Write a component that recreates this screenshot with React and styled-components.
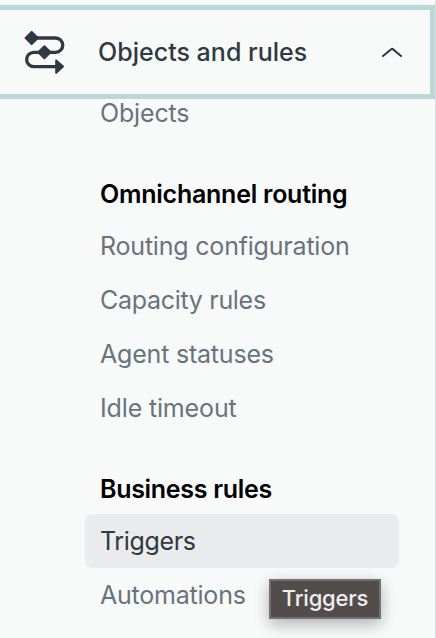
import React from "react";
import styled, { createGlobalStyle } from "styled-components";

const sections = [
  {
    items: [{ label: "Objects", spacing: -0.15 }],
  },
  {
    title: "Omnichannel routing",
    spacing: -0.25,
    items: [
      { label: "Routing configuration", spacing: -0.2 },
      { label: "Capacity rules", spacing: -0.3 },
      { label: "Agent statuses", spacing: -0.2 },
      { label: "Idle timeout", spacing: -0.15 },
    ],
  },
  {
    title: "Business rules",
    spacing: -0.3,
    items: [
      { label: "Triggers", spacing: -0.35, selected: true },
      { label: "Automations", spacing: -0.22, tooltip: "Triggers" },
    ],
  },
];

function RulesIcon() {
  return (
    <svg width="42" height="48" viewBox="0 0 42 48" fill="none">
      <path
        d="M8 10H32.6a7.1 7.1 0 0 1 0 14.3H10.8a7.1 7.1 0 0 0 0 14.3H34"
        stroke="#2f3941"
        strokeWidth="3.3"
      />
      <path
        d="M8.7 3.9L14.8 10L8.7 16.1L2.6 10ZM21.4 18.2L27.5 24.3L21.4 30.4L15.3 24.3ZM33.2 32.4L40 38.6L33.2 44.8Z"
        fill="#2f3941"
        stroke="#2f3941"
        strokeWidth="2"
        strokeLinejoin="round"
      />
    </svg>
  );
}

function ChevronUp() {
  return (
    <svg width="20" height="10" viewBox="0 0 20 10" fill="none">
      <path
        d="M1 9L9.5 1.9a0.8 0.8 0 0 1 1 0L19 9"
        stroke="#2f3941"
        strokeWidth="2"
        strokeLinecap="round"
      />
    </svg>
  );
}

export default function App() {
  return (
    <>
      <GlobalStyle />
      <Sidebar>
        <SectionHeader>
          <RulesIcon />
          <HeaderLabel>Objects and rules</HeaderLabel>
          <ChevronUp />
        </SectionHeader>
        <Menu>
          {sections.map((section, i) => (
            <React.Fragment key={i}>
              {section.title ? (
                <GroupTitle $spacing={section.spacing}>{section.title}</GroupTitle>
              ) : null}
              {section.items.map((item) => (
                <MenuItem
                  key={item.label}
                  $selected={item.selected}
                  $spacing={item.spacing}
                >
                  {item.label}
                  {item.tooltip ? <Tooltip>{item.tooltip}</Tooltip> : null}
                </MenuItem>
              ))}
            </React.Fragment>
          ))}
        </Menu>
      </Sidebar>
    </>
  );
}

const GlobalStyle = createGlobalStyle`
  * {
    box-sizing: border-box;
  }
  body {
    margin: 0;
    background: #f8faf9;
    font-family: Inter, "Liberation Sans", sans-serif;
    overflow: hidden;
  }
`;

const Sidebar = styled.nav`
  width: 436px;
  height: 638px;
  padding-top: 5px;
  border-right: 1px solid #d8dcde;
`;

const SectionHeader = styled.div`
  display: flex;
  align-items: center;
  height: 94px;
  padding: 0 28px 0 23px;
  border: 5px solid #bbd8d6;
  border-left: none;
`;

const HeaderLabel = styled.span`
  flex: 1;
  margin-left: 33px;
  color: #2f3941;
  font-size: 25px;
  font-weight: 500;
  line-height: 32px;
  letter-spacing: 0.02px;
  white-space: nowrap;
`;

const Menu = styled.div`
  margin-top: -13px;
  padding: 0 36px 0 85px;
`;

const GroupTitle = styled.div`
  height: 79px;
  padding: 29px 0 0 15px;
  color: #000;
  font-size: 25px;
  font-weight: 600;
  line-height: 50px;
  letter-spacing: ${(props) => props.$spacing}px;
  white-space: nowrap;
`;

const MenuItem = styled.div`
  position: relative;
  height: 54px;
  padding-left: 15px;
  border-radius: 7px;
  background: ${(props) => (props.$selected ? "#e9ebed" : "transparent")};
  color: ${(props) => (props.$selected ? "#2f3941" : "#68737d")};
  font-size: 25px;
  line-height: 54px;
  letter-spacing: ${(props) => props.$spacing}px;
  white-space: nowrap;
`;

const Tooltip = styled.div`
  position: absolute;
  top: 11px;
  left: 184px;
  width: 112px;
  height: 40px;
  border: 2px solid #737170;
  background: #524d4b;
  box-shadow: 0 5px 16px rgba(0, 0, 0, 0.3);
  color: #f1efee;
  font-size: 22px;
  font-weight: 500;
  line-height: 35px;
  letter-spacing: -0.2px;
  text-align: center;
`;
